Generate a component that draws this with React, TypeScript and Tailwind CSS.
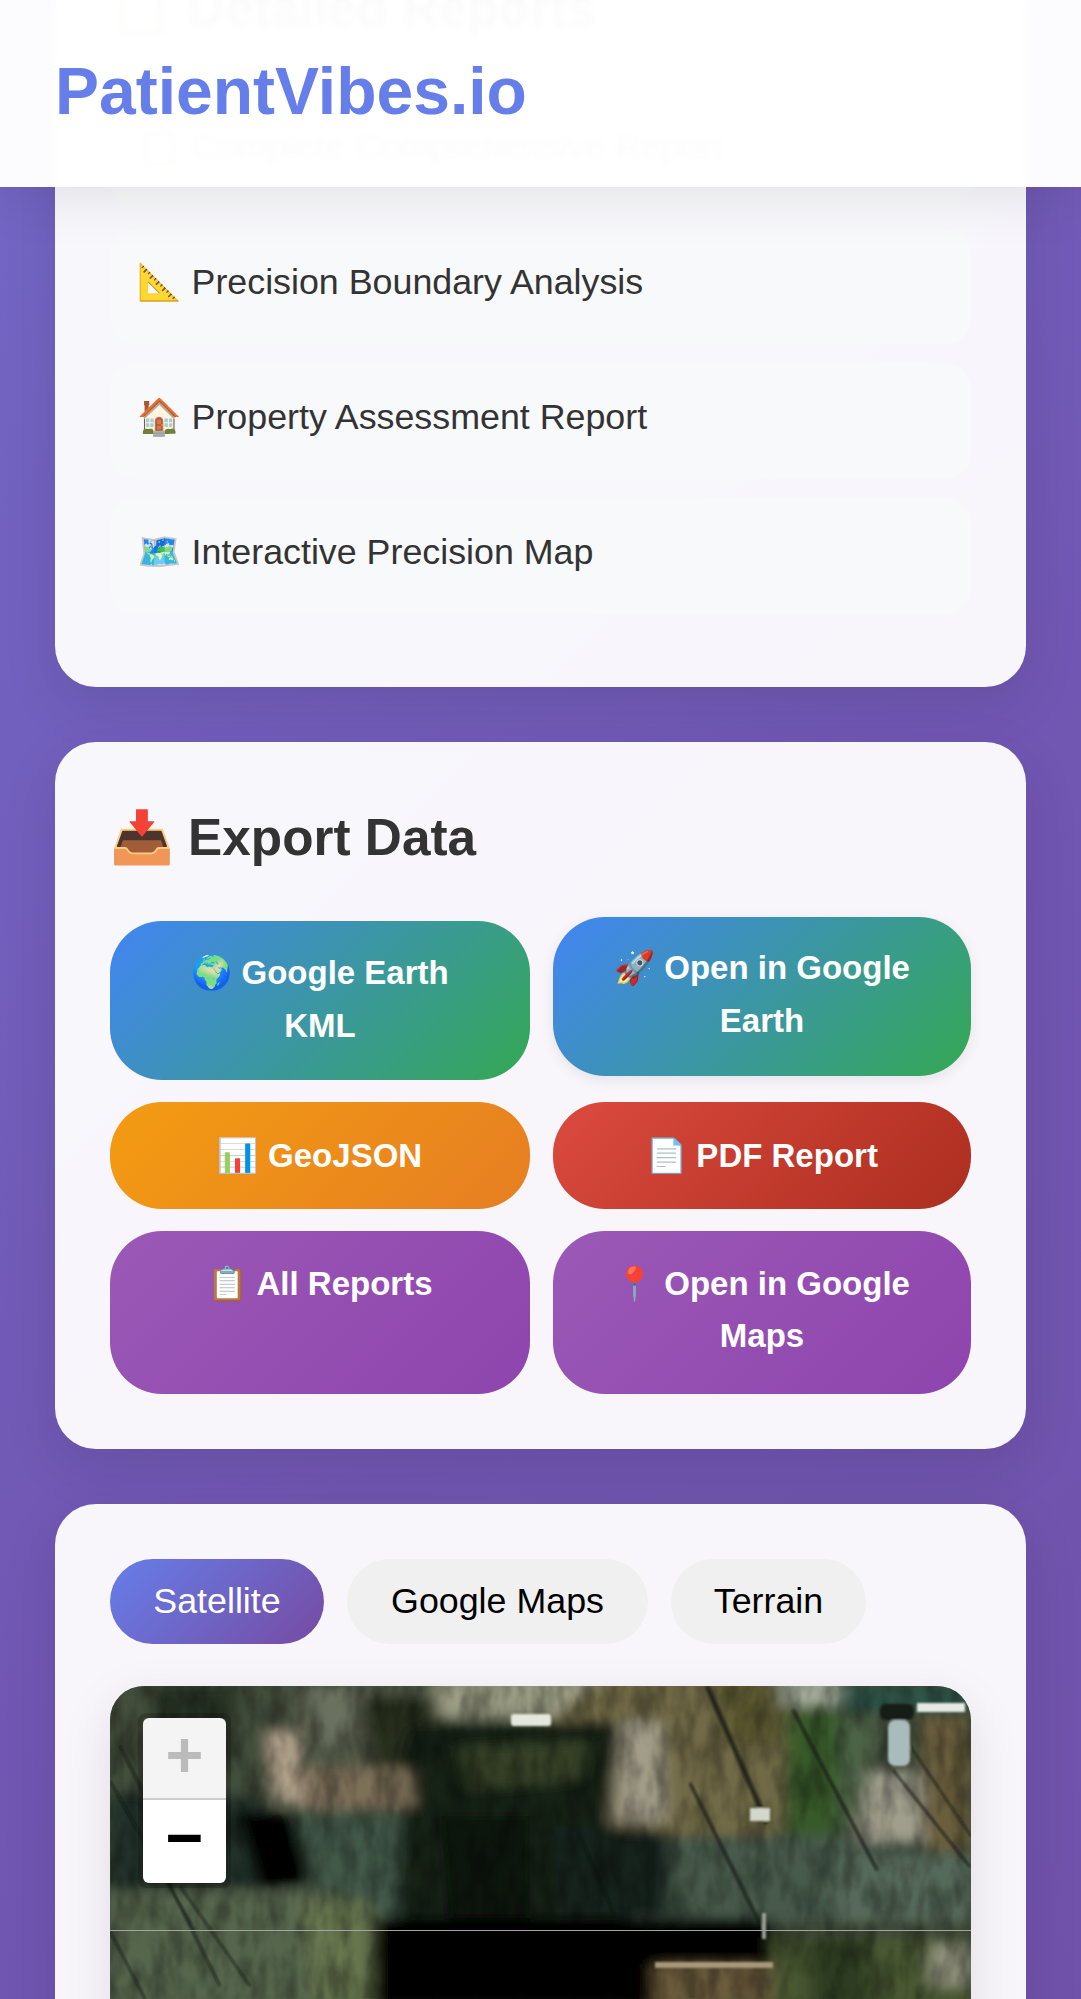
const reports = [
  ['📋', 'Complete Comprehensive Report'],
  ['📐', 'Precision Boundary Analysis'],
  ['🏠', 'Property Assessment Report'],
  ['🗺️', 'Interactive Precision Map'],
];

function MapPicture() {
  const shapes: [string, string][] = [
    ['0,0 175,0 165,110 0,120', '#434e3a'],
    ['40,0 130,0 120,70 60,90', '#2a3526'],
    ['175,0 330,0 320,70 190,90', '#565d4c'],
    ['200,0 250,0 240,50 210,60', '#6a715e'],
    ['250,10 340,10 330,110 270,120', '#262f1e'],
    ['324,-8 495,-8 490,32 330,32', '#9c9d84'],
    ['490,-8 700,-8 670,150 450,150 440,35', '#716b46'],
    ['600,-8 680,-8 670,60 620,60', '#5f5a32'],
    ['300,40 510,35 500,130 520,250 280,250 270,130', '#182419'],
    ['350,60 480,55 470,95 360,105', '#343f28'],
    ['330,130 420,130 420,240 340,240', '#0d1510'],
    ['0,105 150,110 190,200 0,205', '#223329'],
    ['125,125 190,130 215,190 150,205', '#030504'],
    ['185,125 290,125 285,240 215,240', '#43584a'],
    ['0,205 230,205 270,320 0,320', '#56664d'],
    ['190,215 262,215 268,320 205,320', '#67774f'],
    ['510,150 861,150 861,236 520,236', '#465a4c'],
    ['720,170 861,170 861,236 730,236', '#566a5a'],
    ['440,140 560,145 560,230 450,230', '#15231d'],
    ['262,232 662,232 662,320 262,320', '#040404'],
    ['545,278 662,278 662,320 545,320', '#6c5b3c'],
    ['662,252 861,252 861,320 662,320', '#4a5933'],
    ['700,255 760,255 760,320 700,320', '#2e3d22'],
    ['820,258 861,258 861,300 820,300', '#8f917a'],
    ['675,25 730,25 730,150 675,150', '#385a2c'],
    ['730,0 861,0 861,25 730,25', '#2f5549'],
    ['810,30 861,30 861,165 815,165', '#6a5e3e'],
    ['730,30 765,30 760,140 730,140', '#4e6346'],
    ['760,85 810,85 815,155 745,155', '#a09e8c'],
    ['513,35 552,35 556,137 505,137', '#a29c88'],
    ['158,45 186,45 196,120 165,115', '#b5a48e'],
    ['186,82 300,82 305,122 196,125', '#7d6f58'],
    ['670,-8 730,-8 730,20 670,20', '#a1ab98'],
  ];
  const lines: [number, number, number, number, number][] = [
    [597, 0, 657, 137, 5], [580, 97, 653, 244, 3], [683, 24, 767, 184, 3], [783, 84, 860, 181, 2.5],
    [800, 60, 861, 150, 2], [0, 95, 85, 245, 2], [10, 60, 70, 180, 2], [45, 170, 110, 300, 2],
    [0, 245, 35, 313, 2], [470, 150, 505, 230, 1.5], [70, 200, 140, 300, 2],
  ];
  return (
    <svg className="block w-full h-full" viewBox="0 0 861 313" preserveAspectRatio="none">
      <defs>
        <filter id="soft" x="-5%" y="-5%" width="110%" height="110%"><feGaussianBlur stdDeviation="8 6" /></filter>
        <filter id="small" x="-5%" y="-5%" width="110%" height="110%"><feGaussianBlur stdDeviation="1.2" /></filter>
        <filter id="grain" x="0" y="0" width="100%" height="100%">
          <feTurbulence type="fractalNoise" baseFrequency="0.07 0.025" numOctaves="4" seed="11" />
          <feColorMatrix values="0 0 0 0 0  0 0 0 0 0  0 0 0 0 0  2.4 0 0 0 -0.85" />
          <feGaussianBlur stdDeviation="1.2" />
        </filter>
      </defs>
      <rect width="861" height="313" fill="#3f4a38" />
      <g filter="url(#soft)">
        {shapes.map(([p, c], i) => <polygon key={i} points={p} fill={c} />)}
      </g>
      <rect width="861" height="313" filter="url(#grain)" opacity="0.3" />
      <g filter="url(#small)">
        {lines.map(([a, b, c, d, w], i) => <line key={i} x1={a} y1={b} x2={c} y2={d} stroke="#10160f" strokeWidth={w} strokeOpacity="0.7" />)}
        <rect x="401" y="28" width="40" height="12" rx="3" fill="#e4e8dc" />
        <rect x="807" y="17" width="48" height="9" fill="#e6eae2" />
        <rect x="778" y="34" width="22" height="46" rx="7" fill="#a9bcbc" />
        <rect x="770" y="18" width="34" height="16" rx="6" fill="#141c18" />
        <rect x="640" y="122" width="20" height="13" fill="#d2d8cc" />
        <rect x="652" y="227" width="4" height="26" fill="#9ea294" />
        <rect x="545" y="276" width="118" height="6" fill="#a69878" />
      </g>
      <rect x="0" y="244" width="861" height="1" fill="#a5a5a0" />
    </svg>
  );
}

function Btn({ cls, text }: { cls: string; text: string }) {
  return (
    <div className={`rounded-[52px] text-white font-bold text-center text-[33px] px-[55px] ${cls}`}>
      {text}
    </div>
  );
}

export default function App() {
  return (
    <div
      className="relative h-[1999px] overflow-hidden bg-[linear-gradient(135deg,#7367c6_0%,#7156b2_60%,#7052ab_100%)] text-[#333]"
      style={{ fontFamily: '"Liberation Sans", "Noto Color Emoji", sans-serif' }}
    >
      <header className="absolute top-0 left-0 right-0 z-20 h-[187px] pt-[56px] px-[55px] bg-white/[0.98] backdrop-blur-[3px] shadow-[0_7px_55px_rgba(0,0,0,0.1)]">
        <h1 className="text-[66px] font-bold text-[#667eea] leading-[70px]">PatientVibes.io</h1>
      </header>

      <main className="-mt-[86px] px-[55px] flex flex-col gap-[55px]">
        <section className="rounded-[41px] bg-white/95 p-[55px] shadow-[0_17px_55px_rgba(0,0,0,0.1)]">
          <h2 className="text-[51.3px] font-bold leading-[79px] mb-[45px]">📋 Detailed Reports</h2>
          <ul className="flex flex-col gap-[19px] mb-[18px]">
            {reports.map(([e, t]) => (
              <li key={t} className="h-[116px] pl-[27px] pt-[27px] rounded-[26px] bg-[#f8f9fb] text-[35.8px] leading-[55px]">
                {e} {t}
              </li>
            ))}
          </ul>
        </section>

        <section className="rounded-[41px] bg-white/95 p-[55px] shadow-[0_17px_55px_rgba(0,0,0,0.1)]">
          <h2 className="text-[51.3px] font-bold leading-[81px] mb-[43px]">📥 Export Data</h2>
          <div className="grid grid-cols-[420px_418px] gap-x-[23px] gap-y-[22px]">
            <Btn cls="leading-[53px] pt-[25px] pb-[28px] bg-[linear-gradient(135deg,#4285f4,#34a853)]" text="🌍 Google Earth KML" />
            <Btn cls="leading-[53px] pt-[24px] pb-[29px] -translate-y-[4px] bg-[linear-gradient(135deg,#4285f4,#34a853)] shadow-[0_4px_14px_rgba(0,0,0,0.08)]" text="🚀 Open in Google Earth" />
            <Btn cls="leading-[53px] py-[27px] bg-[linear-gradient(135deg,#f39c12,#e67e22)]" text="📊 GeoJSON" />
            <Btn cls="leading-[53px] py-[27px] bg-[linear-gradient(135deg,#dc4a3f,#ac2e1e)]" text="📄 PDF Report" />
            <Btn cls="leading-[52px] pt-[27px] pb-[32px] bg-[linear-gradient(135deg,#9b59b6,#8e44ad)]" text="📋 All Reports" />
            <Btn cls="leading-[52px] pt-[27px] pb-[32px] bg-[linear-gradient(135deg,#9b59b6,#8e44ad)]" text="📍 Open in Google Maps" />
          </div>
        </section>

        <section className="rounded-[41px] bg-white/95 p-[55px] shadow-[0_17px_55px_rgba(0,0,0,0.1)]">
          <div className="flex gap-[23px] mb-[42px]">
            <div className="w-[214px] h-[85px] rounded-[43px] flex items-center justify-center text-[35.8px] text-white bg-[linear-gradient(135deg,#667eea,#764ba2)]">Satellite</div>
            <div className="w-[301px] h-[85px] rounded-[43px] flex items-center justify-center text-[35.8px] text-black bg-[#f0f0f0]">Google Maps</div>
            <div className="w-[195px] h-[85px] rounded-[43px] flex items-center justify-center text-[35.8px] text-black bg-[#f0f0f0]">Terrain</div>
          </div>
          <div className="relative h-[520px] rounded-[34px] overflow-hidden shadow-[0_17px_52px_rgba(0,0,0,0.1)]">
            <div className="h-[313px]"><MapPicture /></div>
            <div className="absolute left-[28px] top-[27px] border-[5px] border-black/20 rounded-[8px] bg-clip-padding" style={{ fontFamily: '"Liberation Mono", monospace' }}>
              <div className="w-[83px] h-[82px] rounded-t-[6px] bg-[#f4f4f4] text-[#bbb] border-b-2 border-[#ccc] flex items-center justify-center text-[65px] font-bold leading-none pt-[4px]">+</div>
              <div className="w-[83px] h-[83px] rounded-b-[6px] bg-white text-black flex items-center justify-center text-[65px] font-bold leading-none pt-[4px]">−</div>
            </div>
          </div>
        </section>
      </main>
    </div>
  );
}
